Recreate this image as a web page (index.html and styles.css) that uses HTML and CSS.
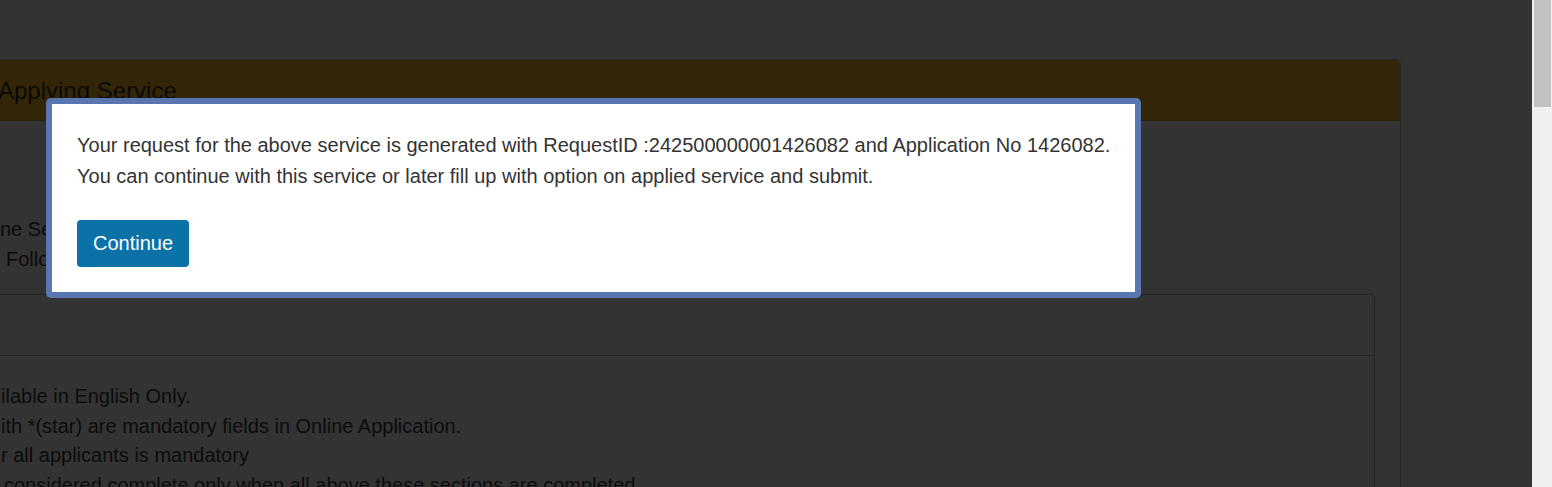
FILE: index.html
```html
<!DOCTYPE html>
<html lang="en">
<head>
<meta charset="utf-8">
<title>Applying Service</title>
<link rel="stylesheet" href="styles.css">
</head>
<body>
<div class="screen">
  <main class="page">
    <section class="panel">
      <div class="panel-heading">Applying Service</div>
      <div class="panel-body">
        <p class="intro intro-a">ne Service</p>
        <p class="intro intro-b">Following</p>
        <div class="inner">
          <div class="inner-heading"></div>
          <ul class="notes">
            <li class="n1">ilable in English Only.</li>
            <li class="n2">ith *(star) are mandatory fields in Online Application.</li>
            <li class="n3">r all applicants is mandatory</li>
            <li class="n4">considered complete only when all above these sections are completed.</li>
          </ul>
        </div>
      </div>
    </section>
    <div class="modal">
      <p class="modal-text">Your request for the above service is generated with RequestID :242500000001426082 and Application No 1426082.<br>You can continue with this service or later fill up with option on applied service and submit.</p>
      <button class="btn" type="button">Continue</button>
    </div>
  </main>
  <aside class="scrollbar"><div class="thumb"></div></aside>
</div>
</body>
</html>
```

FILE: styles.css
```css
html, body {
  margin: 0;
  padding: 0;
  height: 100%;
  overflow: hidden;
}
body {
  font-family: "Liberation Sans", Arial, sans-serif;
  background: #333333;
}
.screen {
  display: flex;
  height: 487px;
}
.page {
  flex: 1;
  position: relative;
  overflow: hidden;
  background: #333333;
  padding-top: 59px;
}
.panel {
  margin-left: -41px;
  width: 1442px;
  border: 1px solid #262626;
  border-radius: 4px;
  box-sizing: border-box;
}
.panel-heading {
  height: 61px;
  box-sizing: border-box;
  background: #332608;
  border-bottom: 1px solid #2b2410;
  border-radius: 3px 3px 0 0;
  font-size: 24px;
  line-height: 24px;
  padding: 19px 0 0 38px;
  color: #0b0904;
}
.panel-body {
  padding: 93px 25px 0 0;
}
.intro {
  margin: 0;
  font-size: 20px;
  line-height: 30px;
  color: #0c0c0c;
  white-space: nowrap;
}
.intro-a { padding-left: 40px; }
.intro-b { padding-left: 46px; }
.inner {
  margin-top: 20px;
  border: 1px solid #262626;
  border-radius: 4px;
  height: 240px;
}
.inner-heading {
  height: 60px;
  border-bottom: 1px solid #262626;
}
.notes {
  list-style: none;
  margin: 0;
  padding: 26px 0 0 40px;
  font-size: 20px;
  line-height: 29.6px;
  color: #0c0c0c;
}
.notes .n4 { padding-left: 3px; }
.modal {
  position: absolute;
  left: 46px;
  top: 98px;
  width: 1095px;
  height: 200px;
  box-sizing: border-box;
  background: #ffffff;
  border: 6px solid #5876b1;
  border-radius: 5px;
  padding: 26px 20px 25px 25px;
}
.modal-text {
  margin: 0 0 28px;
  font-size: 20px;
  line-height: 31px;
  color: #333333;
  white-space: nowrap;
}
.btn {
  display: block;
  height: 47px;
  width: 112px;
  padding: 0;
  border: none;
  border-radius: 4px;
  background: #0b72a8;
  color: #ffffff;
  font-family: "Liberation Sans", Arial, sans-serif;
  font-size: 20px;
  line-height: 47px;
  text-align: center;
}
.scrollbar {
  width: 20px;
  flex: none;
  background: #f0f0f0;
}
.thumb {
  margin: 0 1px 0 2px;
  height: 107px;
  background: #c1c1c1;
}
```
